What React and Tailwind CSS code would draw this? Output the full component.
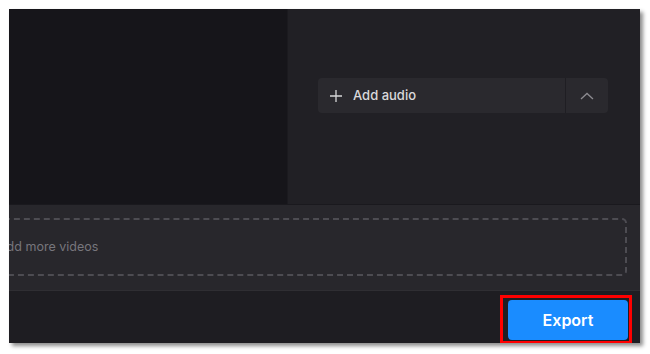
import React from "react";

export default function App() {
  return (
    <div className="w-[650px] h-[354px] bg-white pl-[9px] pt-[9px]" style={{ fontFamily: "Inter, 'Noto Sans', sans-serif" }}>
      <div className="w-[631px] h-[334px] flex flex-col overflow-hidden bg-[#1f1e23] shadow-[3px_3px_4px_rgba(0,0,0,0.45)]">
        {/* top */}
        <div className="flex h-[195px]">
          <div className="w-[278px] bg-[#16151a]" />
          <div className="flex-1 bg-[#212025] border-l border-[#1b1a1f] pl-[30px] pt-[69px] pr-[32px]">
            <div className="flex h-[35px] rounded-[4px] bg-[#2a292e]">
              <div className="flex flex-1 items-center pl-[11px]">
                <svg width="14" height="14" viewBox="0 0 14 14" className="text-[#d6d6d8]">
                  <path d="M7 1v12M1 7h12" stroke="currentColor" strokeWidth="1.3" />
                </svg>
                <span className="ml-[10px] text-[13px] font-medium text-[#d9d9db]">Add audio</span>
              </div>
              <div className="w-px bg-[#1f1e23]" />
              <div className="w-[42px] flex items-center justify-center">
                <svg width="14" height="8" viewBox="0 0 14 8" className="text-[#8c8b90]">
                  <path d="M1 7l6-5.5L13 7" stroke="currentColor" strokeWidth="1.3" fill="none" />
                </svg>
              </div>
            </div>
          </div>
        </div>
        {/* strip */}
        <div className="h-[87px] bg-[#28272c] border-t border-[#1a191e] border-b border-b-[#2f2e33] pt-[13px] pr-[13px]">
          <div className="ml-[-40px] h-[58px] rounded-[5px] border-2 border-dashed border-[#4d4c52] flex items-center pl-[27px]">
            <span className="text-[12.5px] text-[#77767c]">Add more videos</span>
          </div>
        </div>
        {/* bottom bar */}
        <div className="flex-1 bg-[#1e1d22] flex justify-end items-end pr-[8px]">
          <div className="border-[3px] border-[#ff0000] pl-[5px] pr-[1px] pt-[2px] pb-[1px] mb-[-1px]">
            <div className="w-[120px] h-[40px] rounded-[4px] bg-[#1a8cff] flex items-center justify-center text-white text-[16px] font-semibold">
              Export
            </div>
          </div>
        </div>
      </div>
    </div>
  );
}
